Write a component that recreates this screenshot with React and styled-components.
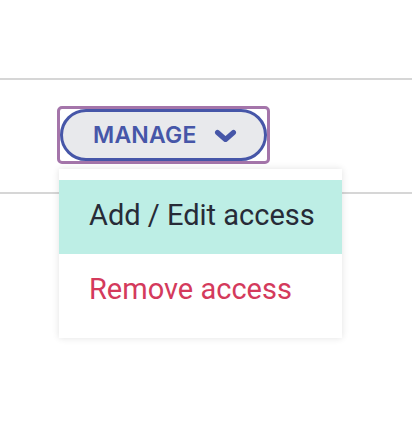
import React from "react";
import styled, { createGlobalStyle } from "styled-components";

const GlobalStyle = createGlobalStyle`
  body {
    margin: 0;
    background: #fff;
    font-family: Roboto, "Liberation Sans", sans-serif;
  }
`;

export default function App() {
  return (
    <Page>
      <GlobalStyle />
      <Section>
        <Anchor>
          <FocusRing>
            <ManageButton type="button">
              MANAGE
              <svg width="23" height="14" viewBox="0 0 23 14" fill="none">
                <polyline
                  points="3.5,3.5 11.5,10.5 19.5,3.5"
                  stroke="#4656a8"
                  strokeWidth="5"
                  strokeLinecap="round"
                  strokeLinejoin="round"
                />
              </svg>
            </ManageButton>
          </FocusRing>
          <Menu>
            <MenuItem $active>Add / Edit access</MenuItem>
            <MenuItem $danger>Remove access</MenuItem>
          </Menu>
        </Anchor>
      </Section>
    </Page>
  );
}

const Page = styled.div`
  min-height: 444px;
  padding-top: 78px;
  box-sizing: border-box;
`;

const Section = styled.div`
  border-top: 2px solid #d6d6d6;
  border-bottom: 2px solid #d6d6d6;
  padding: 26px 0 28px 57px;
`;

const Anchor = styled.div`
  position: relative;
  display: inline-block;
  vertical-align: top;
`;

const FocusRing = styled.div`
  display: flex;
  border: 3px solid #a475aa;
  border-radius: 5px;
`;

const ManageButton = styled.button`
  display: flex;
  align-items: center;
  gap: 17px;
  width: 207px;
  height: 52px;
  padding: 0 0 0 30px;
  box-sizing: border-box;
  background: #e8e9ec;
  border: 3px solid #4656a8;
  border-radius: 26px;
  color: #4656a8;
  font-family: Inter, "Liberation Sans", sans-serif;
  font-weight: 600;
  font-size: 23px;
  letter-spacing: 0.2px;
  cursor: pointer;
  svg {
    margin-top: 2px;
  }
`;

const Menu = styled.ul`
  position: absolute;
  z-index: 1;
  left: 2px;
  top: 63px;
  width: 283px;
  margin: 0;
  padding: 11px 0 10px;
  list-style: none;
  background: #fff;
  box-shadow: 0 0 7px rgba(0, 0, 0, 0.12);
`;

const MenuItem = styled.li`
  height: 74px;
  display: flex;
  align-items: center;
  padding: 0 0 4px 30px;
  box-sizing: border-box;
  font-size: 29px;
  color: ${(p) => (p.$danger ? "#d43a5c" : "#272b37")};
  background: ${(p) => (p.$active ? "#bdeee5" : "transparent")};
`;
